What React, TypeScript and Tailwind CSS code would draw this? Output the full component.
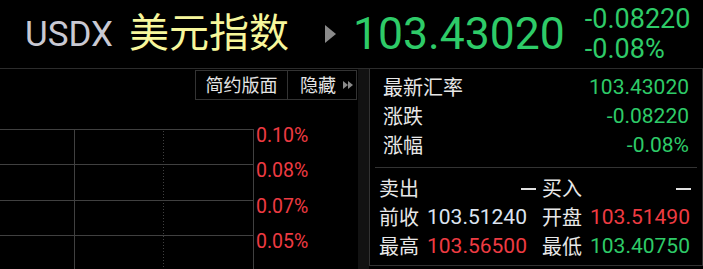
import React from 'react';

const latin = { fontFamily: 'Roboto, "Noto Sans CJK SC", sans-serif' };

function Row({ label, value, color }: { label: string; value: string; color: string }) {
  return (
    <div className="flex h-[29px] items-center justify-between px-[13px]">
      <span className="text-[20px] text-[#e8e8e8]">{label}</span>
      <span className={`text-[21px] ${color}`}>{value}</span>
    </div>
  );
}

function Cell({ label, value, color }: { label: string; value?: string; color?: string }) {
  return (
    <div className="flex flex-1 items-center">
      <span className="text-[20px] text-[#e8e8e8]">{label}</span>
      {value ? (
        <span className={`ml-[8px] text-[21px] ${color}`}>{value}</span>
      ) : (
        <span className="ml-auto mr-[6px] h-[2px] w-[15px] bg-[#e0e0e0]" />
      )}
    </div>
  );
}

export default function App() {
  const green = 'text-[#2ecb68]';
  const red = 'text-[#ee3b42]';

  return (
    <div className="flex h-[269px] w-[703px] flex-col overflow-hidden bg-black" style={latin}>
      {/* Header */}
      <div className="flex h-[69px] shrink-0 items-center border-b border-[#2c2c2c] pl-[25px]">
        <span className="text-[35px] leading-none text-[#c9c9d3]">USDX</span>
        <span className="ml-[16px] text-[40px] leading-none text-[#f7f79c]">美元指数</span>
        <span className="ml-[36px] h-0 w-0 border-y-[9px] border-l-[11px] border-y-transparent border-l-[#8a8a8a]" />
        <span className={`ml-[17px] text-[44.5px] leading-none ${green}`}>103.43020</span>
        <div className={`ml-[20px] flex flex-col text-[27px] leading-[30px] ${green}`}>
          <span>-0.08220</span>
          <span>-0.08%</span>
        </div>
      </div>

      <div className="flex flex-1">
        {/* Chart side */}
        <div className="flex w-[358px] shrink-0 flex-col">
          <div className="mt-[1px] flex h-[30px] justify-end pr-[1px]">
            <div className="flex border border-[#333] text-[18px] text-[#e4e4e4]">
              <div className="flex w-[92px] items-center justify-center border-r border-[#333]">简约版面</div>
              <div className="flex w-[68px] items-center pl-[12px]">
                隐藏
                <span className="ml-[7px] flex">
                  <span className="h-0 w-0 border-y-[4px] border-l-[5px] border-y-transparent border-l-[#8a8a8a]" />
                  <span className="h-0 w-0 border-y-[4px] border-l-[5px] border-y-transparent border-l-[#8a8a8a]" />
                </span>
              </div>
            </div>
          </div>
          <div className="mt-[29px] flex">
            <svg width="254" height="140" className="shrink-0">
              <g stroke="#404040" strokeWidth="1">
                <line x1="0" y1="0.5" x2="254" y2="0.5" />
                <line x1="0" y1="35.5" x2="254" y2="35.5" />
                <line x1="0" y1="71.5" x2="254" y2="71.5" />
                <line x1="0" y1="106.5" x2="254" y2="106.5" />
                <line x1="74.5" y1="0" x2="74.5" y2="140" />
                <line x1="253.5" y1="0" x2="253.5" y2="140" />
                <line x1="163.5" y1="2" x2="163.5" y2="140" strokeDasharray="1 2" />
              </g>
            </svg>
            <div className={`-mt-[4px] ml-[2px] flex flex-col text-[19.5px] leading-[22px] ${red}`}>
              <span className="h-[35px]">0.10%</span>
              <span className="h-[36px]">0.08%</span>
              <span className="h-[35px]">0.07%</span>
              <span className="h-[36px]">0.05%</span>
            </div>
          </div>
        </div>

        <div className="w-[11px] shrink-0 bg-[#121212]" />

        {/* Quote panel */}
        <div className="flex h-[197px] w-[334px] flex-col border-x border-b border-[#333]">
          <div className="pt-[4px]">
            <Row label="最新汇率" value="103.43020" color={green} />
            <Row label="涨跌" value="-0.08220" color={green} />
            <Row label="涨幅" value="-0.08%" color={green} />
          </div>
          <div className="mx-[5px] mt-[7px] border-t border-[#333]" />
          <div className="flex flex-col pl-[9px] pr-[5px] pt-[6px]">
            <div className="flex h-[29px]">
              <div className="flex w-[163px] items-center">
                <Cell label="卖出" />
              </div>
              <Cell label="买入" />
            </div>
            <div className="flex h-[29px]">
              <div className="flex w-[163px] items-center">
                <Cell label="前收" value="103.51240" color="text-[#dce4f0]" />
              </div>
              <Cell label="开盘" value="103.51490" color={red} />
            </div>
            <div className="flex h-[29px]">
              <div className="flex w-[163px] items-center">
                <Cell label="最高" value="103.56500" color={red} />
              </div>
              <Cell label="最低" value="103.40750" color={green} />
            </div>
          </div>
        </div>
      </div>
    </div>
  );
}
